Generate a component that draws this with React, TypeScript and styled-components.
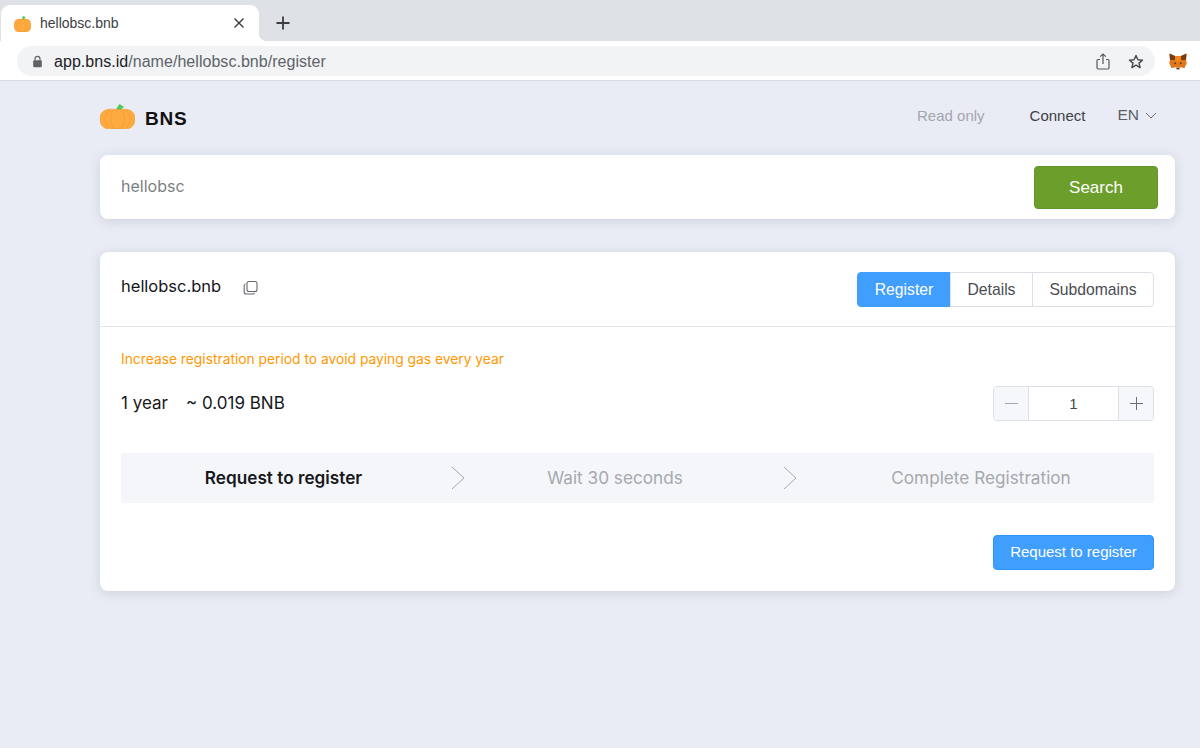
import React from "react";
import styled, { createGlobalStyle } from "styled-components";

const GlobalStyle = createGlobalStyle`
  html, body {
    margin: 0;
    padding: 0;
    background: #e9ecf4;
  }
  * {
    box-sizing: border-box;
  }
`;

const Pumpkin = ({ w, h }: { w: number; h: number }) => (
  <svg width={w} height={h} viewBox="0 0 36 26" preserveAspectRatio="none">
    <path d="M15 9 C17 6 18 3 20 1 L25 4 C22 5 21 7 21 9 Z" fill="#4fc95f" />
    <path d="M6 7 C10 5.5 14 6.5 18 6.5 C22 6.5 26 5.5 30 7 C34 8 36 12 36 16 C36 21 33 25 29 25.5 C22 26.2 14 26.2 7 25.5 C3 25 0 21 0 16 C0 12 2 8 6 7 Z" fill="#fdaa41" stroke="#f4952a" strokeWidth="0.6" />
    <g fill="none" stroke="#f08f22" strokeWidth="0.7" strokeDasharray="1.2 0.9">
      <path d="M9 7 C4 12 4 20 9 25" />
      <path d="M14 6.5 C10 12 10 20 14 25.5" />
      <path d="M22 6.5 C26 12 26 20 22 25.5" />
      <path d="M27 7 C32 12 32 20 27 25" />
    </g>
  </svg>
);

const FoxIcon = () => (
  <svg width="18" height="17" viewBox="0 0 18 17">
    <path d="M0.5 0.5 L6 3 H12 L17.5 0.5 L17 7 L17.8 10 L15.5 15 L11.5 14 L10.5 16.5 H7.5 L6.5 14 L2.5 15 L0.2 10 L1 7 Z" fill="#e2761b" />
    <path d="M0.5 0.5 L6 3 L6 7 L1 7 Z" fill="#763d16" />
    <path d="M17.5 0.5 L12 3 L12 7 L17 7 Z" fill="#763d16" />
    <path d="M6 3 H12 L12 7 L10 9 H8 L6 7 Z" fill="#f6851b" />
    <path d="M3.5 9 L7 9.5 L6.5 14 L2.5 15 Z" fill="#e4761b" />
    <path d="M14.5 9 L11 9.5 L11.5 14 L15.5 15 Z" fill="#e4761b" />
    <path d="M7.5 14 H10.5 L10.5 16.5 H7.5 Z" fill="#c0ad9e" />
    <path d="M8 15 H10 V16 H8 Z" fill="#233447" />
    <circle cx="6.2" cy="10.4" r="0.8" fill="#233447" />
    <circle cx="11.8" cy="10.4" r="0.8" fill="#233447" />
  </svg>
);

const Page = styled.div`
  width: 1200px;
  height: 748px;
  overflow: hidden;
  background: #e9ecf4;
  font-family: "Liberation Sans", Arial, sans-serif;
`;

const TabStrip = styled.div`
  height: 41px;
  background: #dee1e6;
  padding: 5px 0 0 1px;
  display: flex;
  align-items: stretch;
`;

const Tab = styled.div`
  width: 258px;
  background: #fff;
  border-radius: 9px 9px 0 0;
  display: flex;
  align-items: center;
  padding: 0 15px 0 13px;
  position: relative;

  &::after {
    content: "";
    position: absolute;
    right: -8px;
    bottom: 0;
    width: 8px;
    height: 8px;
    background: radial-gradient(circle at 100% 0, transparent 8px, #fff 8.5px);
  }
`;

const TabTitle = styled.span`
  flex: 1;
  margin-left: 9px;
  font-size: 14px;
  color: #3c4043;
`;

const TabClose = styled.svg`
  width: 10px;
  height: 10px;
  stroke: #3a3c40;
  stroke-width: 1.4;
`;

const NewTab = styled.svg`
  width: 14px;
  height: 14px;
  margin: 11px 0 0 17px;
  stroke: #3a3c40;
  stroke-width: 1.8;
`;

const Toolbar = styled.div`
  height: 40px;
  background: #fff;
  border-bottom: 1px solid #dadce0;
  padding: 5px 13px 4px 17px;
  display: flex;
  align-items: center;
  gap: 14px;
`;

const Omnibox = styled.div`
  flex: 1;
  height: 30px;
  border-radius: 15px;
  background: #f1f3f4;
  display: flex;
  align-items: center;
  padding: 0 11px 0 15px;
`;

const Url = styled.div`
  flex: 1;
  margin: 1px 0 0 11px;
  font-size: 16px;
  letter-spacing: 0.04px;
  color: #5f6368;

  b {
    font-weight: 400;
    color: #202124;
  }
`;

const OmniIcons = styled.div`
  display: flex;
  align-items: center;
  gap: 18px;
  margin-left: -2px;
`;

const Content = styled.div`
  padding: 0 25px 0 100px;
`;

const Header = styled.div`
  height: 74px;
  display: flex;
  align-items: center;
  font-size: 15px;
  padding-top: 1px;
`;

const Brand = styled.div`
  flex: 1;
  display: flex;
  align-items: center;
  gap: 10px;
  font-size: 19px;
  font-weight: 700;
  letter-spacing: 0.8px;
  color: #111;

  svg {
    margin-top: -5px;
  }
`;

const NavItem = styled.span<{ $muted?: boolean }>`
  color: ${p => (p.$muted ? "#a3a6ae" : "#3d3f45")};
  margin: -7px 0 0 ${p => (p.$muted ? "0" : "45px")};
`;

const Lang = styled.span`
  display: flex;
  align-items: center;
  gap: 6px;
  margin: -7px 18px 0 32px;
  color: #5b5e66;
  font-size: 15.5px;
`;

const Card = styled.div`
  background: #fff;
  border-radius: 8px;
  box-shadow: 0 2px 12px rgba(60, 70, 100, 0.16);
`;

const SearchCard = styled(Card)`
  height: 64px;
  display: flex;
  align-items: center;
  justify-content: space-between;
  padding: 0 17px 0 21px;
  margin-bottom: 33px;
`;

const SearchValue = styled.span`
  font-family: Inter, sans-serif;
  font-size: 16px;
  color: #7d7f84;
  margin-top: -2px;
`;

const SearchButton = styled.button`
  width: 124px;
  height: 43px;
  padding: 1px 0 0;
  border-radius: 4px;
  border: 1px solid #62982a;
  background: #6c9e2b;
  color: #fff;
  font: 400 17px "Liberation Sans", Arial, sans-serif;
`;

const CardHead = styled.div`
  height: 75px;
  border-bottom: 1px solid #e1e5ec;
  display: flex;
  align-items: center;
  padding: 0 21px;
`;

const Name = styled.span`
  font-family: Inter, sans-serif;
  font-size: 16.5px;
  color: #15161a;
  margin-top: -7px;
`;

const CopyIcon = styled.svg`
  width: 15px;
  height: 15px;
  margin: -3px auto 0 22px;
  fill: none;
  stroke: #67696f;
  stroke-width: 1.1;
`;

const Tabs = styled.div`
  display: flex;
  height: 35px;
  margin-top: 1px;
`;

const TabButton = styled.button<{ $active?: boolean; $w: number }>`
  height: 35px;
  padding: 0;
  margin-left: -1px;
  width: ${p => p.$w}px;
  font: ${p => (p.$active ? 500 : 400)} 15.7px "Liberation Sans", Arial, sans-serif;
  background: ${p => (p.$active ? "#409eff" : "#fff")};
  color: ${p => (p.$active ? "#fff" : "#4a4c52")};
  border: 1px solid ${p => (p.$active ? "#409eff" : "#dcdfe6")};

  &:first-child {
    border-radius: 4px 0 0 4px;
  }
  &:last-child {
    border-radius: 0 4px 4px 0;
  }
`;

const CardBody = styled.div`
  padding: 0 21px 21px;
`;

const Notice = styled.div`
  font-family: Inter, sans-serif;
  margin-top: 23px;
  font-size: 13.8px;
  line-height: 18px;
  color: #ff9800;
`;

const PriceRow = styled.div`
  margin-top: 18px;
  height: 35px;
  display: flex;
  align-items: center;
  justify-content: space-between;
`;

const Price = styled.div`
  font-family: Inter, sans-serif;
  font-size: 17px;
  color: #17181c;
  display: flex;
  gap: 18px;
  margin-top: -1px;
`;

const Stepper = styled.div`
  width: 161px;
  height: 35px;
  border: 1px solid #dcdfe6;
  border-radius: 4px;
  display: flex;
  overflow: hidden;
`;

const StepperSide = styled.div<{ $right?: boolean }>`
  width: 35px;
  background: #f5f7fa;
  display: flex;
  align-items: center;
  justify-content: center;
  border-${p => (p.$right ? "left" : "right")}: 1px solid #dcdfe6;
`;

const StepperValue = styled.div`
  flex: 1;
  display: flex;
  align-items: center;
  justify-content: center;
  padding-bottom: 1px;
  font-size: 15px;
  color: #45474d;
`;

const Steps = styled.div`
  margin-top: 32px;
  height: 50px;
  background: #f4f6fa;
  border-radius: 2px;
  display: grid;
  grid-template-columns: 325px 24px 290px 48px 1fr;
  align-items: center;
  font-family: Inter, sans-serif;
  text-align: center;
`;

const Step = styled.div<{ $active?: boolean }>`
  color: ${p => (p.$active ? "#17181c" : "#a6a8ae")};
  font-weight: ${p => (p.$active ? 600 : 400)};
  font-size: 17.2px;
  margin-top: -2px;
`;

const StepArrow = styled.svg<{ $offset: number }>`
  width: 14px;
  height: 24px;
  fill: none;
  stroke: #a6a8ae;
  stroke-width: 1;
  margin-left: ${p => p.$offset}px;
`;

const Actions = styled.div`
  margin-top: 32px;
  display: flex;
  justify-content: flex-end;
`;

const PrimaryButton = styled.button`
  width: 161px;
  height: 35px;
  padding: 0 0 2px;
  border: 1px solid #2f95fb;
  border-radius: 4px;
  background: #409eff;
  color: #fff;
  font: 400 15px "Liberation Sans", Arial, sans-serif;
`;

export default function App() {
  return (
    <Page>
      <GlobalStyle />
      <TabStrip>
        <Tab>
          <Pumpkin w={17} h={17} />
          <TabTitle>hellobsc.bnb</TabTitle>
          <TabClose viewBox="0 0 10 10">
            <path d="M0.5 0.5 L9.5 9.5 M9.5 0.5 L0.5 9.5" />
          </TabClose>
        </Tab>
        <NewTab viewBox="0 0 14 14">
          <path d="M7 0.5 V13.5 M0.5 7 H13.5" />
        </NewTab>
      </TabStrip>
      <Toolbar>
        <Omnibox>
          <svg width="11" height="13" viewBox="0 0 11 13">
            <path d="M3 5.5 V3.8 A2.5 2.5 0 0 1 8 3.8 V5.5" fill="none" stroke="#5f6368" strokeWidth="1.2" />
            <rect x="1.2" y="5.2" width="8.6" height="7" rx="1" fill="#5f6368" />
          </svg>
          <Url>
            <b>app.bns.id</b>/name/hellobsc.bnb/register
          </Url>
          <OmniIcons>
            <svg width="14" height="17" viewBox="0 0 14 17" fill="none" stroke="#55585d" strokeWidth="1.2">
              <path d="M4 6.5 H2.2 A1.2 1.2 0 0 0 1 7.7 V14.8 A1.2 1.2 0 0 0 2.2 16 H11.8 A1.2 1.2 0 0 0 13 14.8 V7.7 A1.2 1.2 0 0 0 11.8 6.5 H10" />
              <path d="M7 11 V1 M4.2 3.6 L7 1 L9.8 3.6" />
            </svg>
            <svg width="16" height="15" viewBox="0 0 16 15" fill="none" stroke="#45484d" strokeWidth="1.4">
              <path d="M8 1.5 L9.9 5.7 L14.5 6.1 L11 9.1 L12.1 13.6 L8 11.2 L3.9 13.6 L5 9.1 L1.5 6.1 L6.1 5.7 Z" strokeLinejoin="round" />
            </svg>
          </OmniIcons>
        </Omnibox>
        <FoxIcon />
      </Toolbar>
      <Content>
        <Header>
          <Brand>
            <Pumpkin w={35} h={26} />
            BNS
          </Brand>
          <NavItem $muted>Read only</NavItem>
          <NavItem>Connect</NavItem>
          <Lang>
            EN
            <svg width="12" height="7" viewBox="0 0 12 7" fill="none" stroke="#6b6e75" strokeWidth="1">
              <path d="M1 1 L6 6 L11 1" />
            </svg>
          </Lang>
        </Header>
        <SearchCard>
          <SearchValue>hellobsc</SearchValue>
          <SearchButton>Search</SearchButton>
        </SearchCard>
        <Card>
          <CardHead>
            <Name>hellobsc.bnb</Name>
            <CopyIcon viewBox="0 0 15 15">
              <rect x="4" y="1.5" width="10" height="10" rx="2" />
              <path d="M2.5 4 A1.5 1.5 0 0 0 1.2 5.5 V12 A2 2 0 0 0 3.2 14 H10 A1.5 1.5 0 0 0 11.5 12.7" />
            </CopyIcon>
            <Tabs>
              <TabButton $active $w={94}>Register</TabButton>
              <TabButton $w={83}>Details</TabButton>
              <TabButton $w={122}>Subdomains</TabButton>
            </Tabs>
          </CardHead>
          <CardBody>
            <Notice>Increase registration period to avoid paying gas every year</Notice>
            <PriceRow>
              <Price>
                <span>1 year</span>
                <span>~ 0.019 BNB</span>
              </Price>
              <Stepper>
                <StepperSide>
                  <svg width="13" height="1" viewBox="0 0 13 1"><path d="M0 0.5 H13" stroke="#a6a8ae" /></svg>
                </StepperSide>
                <StepperValue>1</StepperValue>
                <StepperSide $right>
                  <svg width="13" height="13" viewBox="0 0 13 13"><path d="M0 6.5 H13 M6.5 0 V13" stroke="#6b6e75" /></svg>
                </StepperSide>
              </Stepper>
            </PriceRow>
            <Steps>
              <Step $active>Request to register</Step>
              <StepArrow $offset={5} viewBox="0 0 14 24"><path d="M1 1 L13 12 L1 23" /></StepArrow>
              <Step>Wait 30 seconds</Step>
              <StepArrow $offset={23} viewBox="0 0 14 24"><path d="M1 1 L13 12 L1 23" /></StepArrow>
              <Step>Complete Registration</Step>
            </Steps>
            <Actions>
              <PrimaryButton>Request to register</PrimaryButton>
            </Actions>
          </CardBody>
        </Card>
      </Content>
    </Page>
  );
}
